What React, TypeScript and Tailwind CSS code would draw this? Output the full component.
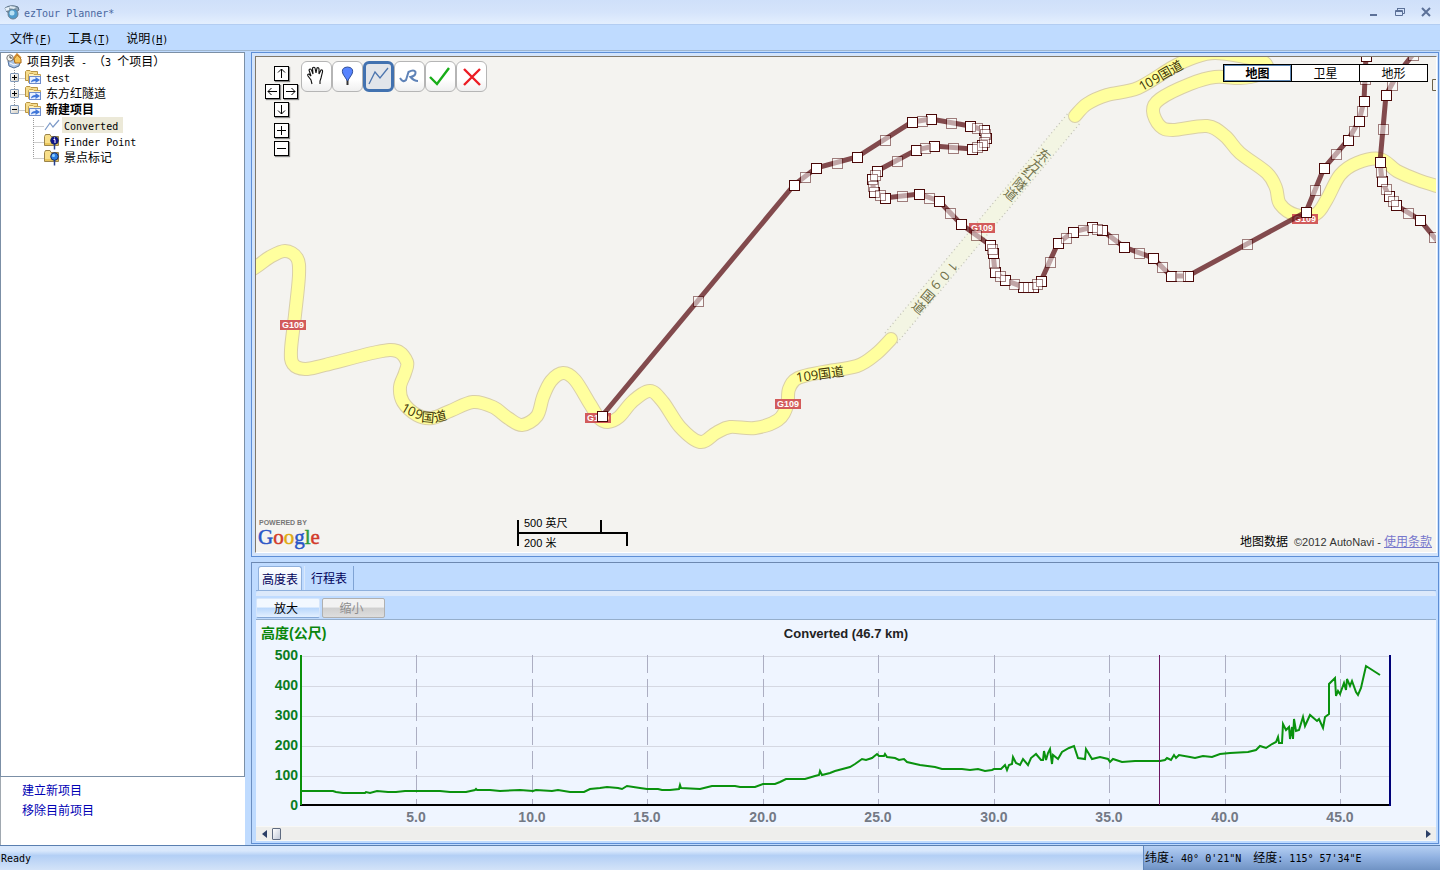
import { Fragment, type ReactNode } from 'react';

type Point = [number, number];

const ROUTE_WEST: Point[] = [
    [602, 416], [794, 185], [816, 168], [857, 157], [912, 122], [931, 119], [970, 126], [984, 130],
    [986, 138], [982, 145], [972, 149], [934, 146], [916, 150], [877, 171], [872, 179], [874, 192],
    [885, 198], [919, 194], [939, 201], [961, 224], [990, 245], [993, 253], [995, 272], [1005, 280],
    [1023, 287], [1033, 287], [1041, 281], [1058, 243], [1073, 232], [1092, 227], [1102, 230],
    [1124, 247], [1153, 258], [1171, 276], [1188, 276], [1306, 212], [1324, 168], [1348, 140],
    [1359, 121], [1364, 101], [1366, 56],
];

const ROUTE_EAST: Point[] = [
    [1428, 35], [1397, 75], [1386, 95], [1380, 162], [1382, 181], [1389, 196], [1396, 205],
    [1420, 220], [1448, 254],
];

const ROAD_WEST: Point[] = [
    [240, 277], [256, 267], [270, 257], [285, 251], [297, 258], [299, 275], [295, 315], [291, 350],
    [293, 364], [305, 369], [325, 365], [377, 352], [397, 351], [407, 362], [405, 373], [400, 387],
    [403, 402], [417, 415], [432, 418], [450, 411], [473, 402], [493, 407], [508, 418], [522, 425],
    [537, 416], [543, 397], [551, 381], [563, 373], [575, 380], [590, 404], [599, 418], [608, 422],
    [619, 417], [633, 401], [650, 391], [663, 402], [680, 427], [700, 442], [716, 433], [730, 427],
    [755, 428], [778, 420], [787, 406], [789, 389], [798, 378], [823, 372], [857, 366], [876, 354],
    [891, 339],
];

const ROAD_EAST: Point[] = [
    [1075, 116], [1087, 104], [1107, 95], [1138, 88], [1173, 67], [1195, 57], [1215, 53], [1245, 57],
    [1262, 61], [1267, 68], [1258, 75], [1240, 78], [1215, 77], [1190, 84], [1160, 99], [1153, 111],
    [1160, 126], [1173, 130], [1207, 126], [1225, 136], [1240, 153], [1267, 173], [1276, 188],
    [1280, 204], [1296, 215], [1316, 214], [1327, 199], [1340, 175], [1357, 163], [1380, 159],
    [1397, 171], [1418, 180], [1440, 187],
];

const HIGHWAY_SIGNS: Point[] = [[293, 325], [598, 418], [788, 404], [982, 228], [1305, 219]];

const ELEVATION: Point[] = [
    [301, 791], [333, 791], [336, 792], [343, 793], [365, 793], [366, 792], [370, 793], [377, 791],
    [388, 792], [396, 792], [405, 791], [440, 791], [450, 792], [466, 792], [475, 790], [476, 789],
    [477, 790], [490, 790], [500, 791], [520, 790], [533, 791], [536, 790], [552, 791], [558, 790],
    [570, 792], [584, 792], [590, 789], [600, 788], [607, 787], [618, 788], [622, 789], [627, 786],
    [640, 788], [647, 789], [658, 789], [662, 790], [670, 790], [679, 789], [680, 785], [681, 788],
    [700, 789], [708, 787], [712, 786], [735, 786], [740, 787], [755, 787], [763, 784], [775, 784],
    [780, 782], [786, 779], [800, 779], [805, 779], [815, 776], [819, 775], [820, 771], [822, 775],
    [830, 773], [835, 771], [850, 767], [855, 764], [862, 759], [866, 760], [872, 758], [877, 754],
    [879, 756], [884, 756], [885, 754], [887, 757], [895, 758], [899, 760], [904, 759], [907, 762],
    [920, 765], [935, 767], [942, 769], [958, 769], [962, 769], [970, 770], [978, 769], [985, 771],
    [992, 770], [994, 769], [1001, 769], [1005, 765], [1007, 770], [1009, 765], [1012, 764],
    [1013, 757], [1016, 763], [1020, 765], [1023, 759], [1028, 765], [1031, 758], [1036, 754],
    [1041, 760], [1043, 760], [1044, 751], [1046, 760], [1048, 753], [1050, 749], [1052, 764],
    [1053, 755], [1058, 759], [1062, 752], [1069, 748], [1074, 746], [1078, 758], [1085, 759],
    [1086, 749], [1092, 759], [1100, 757], [1108, 759], [1110, 762], [1113, 759], [1122, 762],
    [1135, 761], [1160, 761], [1165, 760], [1167, 758], [1171, 760], [1174, 755], [1176, 758],
    [1179, 755], [1190, 757], [1195, 758], [1203, 756], [1212, 757], [1220, 754], [1230, 753],
    [1248, 752], [1256, 750], [1260, 746], [1266, 748], [1272, 744], [1276, 742], [1278, 737],
    [1279, 743], [1282, 743], [1283, 724], [1286, 730], [1289, 727], [1290, 739], [1292, 727],
    [1293, 739], [1294, 719], [1296, 731], [1299, 730], [1303, 717], [1305, 726], [1310, 715],
    [1317, 721], [1319, 719], [1323, 728], [1325, 717], [1329, 714], [1329, 684], [1335, 678],
    [1336, 696], [1338, 691], [1340, 694], [1344, 683], [1346, 690], [1347, 679], [1350, 686],
    [1352, 681], [1356, 692], [1358, 695], [1361, 688], [1366, 666], [1380, 675],
];

const toPoints = (points: Point[]) => points.map((p) => p.join(',')).join(' ');

// Catmull-Rom spline through all points
const smooth = (points: Point[]) => {
    let d = `M${points[0][0]} ${points[0][1]}`;
    for (let i = 0; i < points.length - 1; i++) {
        const p0 = points[i - 1] ?? points[i];
        const p1 = points[i];
        const p2 = points[i + 1];
        const p3 = points[i + 2] ?? p2;
        d += `C${p1[0] + (p2[0] - p0[0]) / 6} ${p1[1] + (p2[1] - p0[1]) / 6} ${p2[0] - (p3[0] - p1[0]) / 6} ${p2[1] - (p3[1] - p1[1]) / 6} ${p2[0]} ${p2[1]}`;
    }
    return d;
};

// Latin runs use a narrow monospace next to the full-width characters
function Mixed({ children }: { children: string }) {
    return (
        <>
            {children.split(/([\x20-\x7e°]+)/).map((part, i) =>
                i % 2 ? (
                    <span key={i} className="font-['DejaVu_Sans_Mono',monospace] text-[10px] leading-none">{part}</span>
                ) : (
                    <Fragment key={i}>{part}</Fragment>
                )
            )}
        </>
    );
}

function AppIcon() {
    return (
        <svg width="16" height="16" viewBox="0 0 16 16">
            <path d="M1 4 Q7 0 14 3 L15 6 L10 9 L3 8Z" fill="#8fa3b5" stroke="#5b7186" />
            <path d="M1 4 L5 3 L5 6 L2 7Z" fill="#e8f2fa" />
            <circle cx="9" cy="10" r="5" fill="#4f9ccc" stroke="#6a7f90" />
            <circle cx="8" cy="9" r="2.5" fill="#b9e2f5" />
            <path d="M6 2 L12 3 L10 5 L5 4Z" fill="#dfe9f0" />
        </svg>
    );
}

function RootIcon() {
    return (
        <svg width="16" height="16" viewBox="0 0 16 16">
            <path d="M2 8 L9 6 L14 9 L13 13 L8 15 L3 13Z" fill="#a9c3e6" stroke="#52719c" />
            <path d="M4 10 L8 12 L13 10" fill="none" stroke="#fff" />
            <path d="M8 6 L11 2 L15 6 V10 H9Z" fill="#f7c65a" stroke="#a8691a" />
            <path d="M7 6 L11 1 L15 5" fill="none" stroke="#d08a2e" strokeWidth="1.5" />
            <circle cx="4" cy="5" r="3.2" fill="#f4f4ee" stroke="#777" />
            <path d="M4 3 V5 H6" fill="none" stroke="#444" />
        </svg>
    );
}

function ProjectIcon() {
    return (
        <svg width="17" height="16" viewBox="0 0 17 16">
            <path d="M.5 11.500 V2.500 L1.500 1.500 H5 L6 2.500 H12.500 V11.500Z" fill="#f6dc8c" stroke="#b99443" />
            <path d="M3.500 13.500 V5.500 L4.500 4.500 H8 L9 5.500 H15.500 V13.500Z" fill="#fff1bd" stroke="#c8a552" />
            <rect x="4.500" y="7.500" width="11" height="7" fill="#e9f1ff" stroke="#6f8ccb" />
            <path d="M6 13.500 Q6 10 10.500 10 V8 L15 11 L10.500 14 V12 Q7.500 12 6 13.500Z" fill="#3f76d9" />
        </svg>
    );
}

function PointFolderIcon({ info }: { info?: boolean }) {
    return (
        <svg width="16" height="17" viewBox="0 0 16 17">
            <path d="M.5 12.500 V3.500 L1.500 1.500 H6 L7 3.500 H14.500 V12.500Z" fill="#f8df8a" stroke="#9b844a" />
            <path d="M1 12 V10 H14 V12Z" fill="#e8c55c" />
            <path d="M10.500 10 V16.500" stroke="#27408f" strokeWidth="1.500" />
            <circle cx="10.500" cy="7.500" r="3.800" fill={info ? '#10108c' : '#2b7de0'} stroke="#152a66" />
            {info ? (
                <path d="M9.500 6.500 H11 V10 M10.500 4.500 V5.500" stroke="#fff" fill="none" />
            ) : (
                <circle cx="9.500" cy="6.500" r="1.500" fill="#8fd0ff" />
            )}
        </svg>
    );
}

function Expander({ open, label }: { open?: boolean; label: string }) {
    return (
        <button
            aria-label={label}
            aria-expanded={!!open}
            className="h-[9px] w-[9px] shrink-0 rounded-[1px] border border-[#8098b8] bg-linear-to-br from-white to-[#d5d0c4]"
        >
            <svg width="7" height="7" viewBox="0 0 7 7" className="block">
                <path d={open ? 'M1 3.500H6' : 'M1 3.500H6M3.500 1V6'} stroke="#000" />
            </svg>
        </button>
    );
}

function ProjectRow({ name, open }: { name: string; open?: boolean }) {
    return (
        <li className="flex h-4 items-center pl-[9px]">
            <Expander open={open} label={name} />
            <span className="ml-[6px] flex w-[21px] shrink-0">
                <ProjectIcon />
            </span>
            <span className={open ? 'font-bold' : ''}>
                <Mixed>{name}</Mixed>
            </span>
        </li>
    );
}

function ItemRow({ name, icon, selected }: { name: string; icon: ReactNode; selected?: boolean }) {
    return (
        <li className="flex h-4 items-center pl-[43px]">
            <span className="flex w-[18px] shrink-0">{icon}</span>
            <span className={selected ? 'bg-[#ece9d8] pl-[2px] pr-[5px]' : 'px-[2px]'}>
                <Mixed>{name}</Mixed>
            </span>
        </li>
    );
}

function Sidebar() {
    return (
        <aside className="flex w-[245px] shrink-0 flex-col bg-white">
            <div className="relative flex-1 border border-[#7b8fa6] leading-4">
                <svg className="pointer-events-none absolute left-0 top-0" width="64" height="120" viewBox="1 53 64 120">
                    <path
                        d="M14.500 70V106M14.500 78.500H25M14.500 94.500H25M14.500 110.500H25M33.500 118V158.500M33.500 126.500H44M33.500 142.500H44M33.500 158.500H44"
                        stroke="#9a9a9a"
                        strokeDasharray="1 1"
                        fill="none"
                    />
                </svg>
                <ul className="relative whitespace-pre">
                    <li className="flex h-4 items-center pl-[5px]">
                        <span className="w-[21px] shrink-0"><RootIcon /></span>
                        <span><Mixed>项目列表 - （3 个项目）</Mixed></span>
                    </li>
                    <ProjectRow name="test" />
                    <ProjectRow name="东方红隧道" />
                    <ProjectRow name="新建项目" open />
                    <ItemRow
                        name="Converted"
                        selected
                        icon={
                            <svg width="16" height="16" viewBox="0 0 16 16">
                                <path d="M1 13 L6 6 L9 10 L15 3" fill="none" stroke="#7d9ac8" strokeWidth="1.2" />
                            </svg>
                        }
                    />
                    <ItemRow name="Finder Point" icon={<PointFolderIcon info />} />
                    <ItemRow name="景点标记" icon={<PointFolderIcon />} />
                </ul>
            </div>
            <div className="flex h-[68px] flex-col items-start border-l border-[#a0a8b0] pl-[21px] pt-[3px] leading-5 text-[#0000b4]">
                <a href="#new">建立新项目</a>
                <a href="#remove">移除目前项目</a>
            </div>
        </aside>
    );
}

function Road({ points }: { points: Point[] }) {
    const d = smooth(points);
    return (
        <g fill="none" strokeLinecap="round" strokeLinejoin="round">
            <path d={d} stroke="#d9cfa8" strokeWidth="14" />
            <path d={d} stroke="#ffff9e" strokeWidth="12" />
        </g>
    );
}

function Route({ points }: { points: Point[] }) {
    return (
        <g>
            <polyline points={toPoints(points)} fill="none" stroke="#5a0f14" strokeOpacity=".74" strokeWidth="5" />
            {points.map(([x, y], i) => (
                <Fragment key={i}>
                    <rect x={x - 4.5} y={y - 4.5} width="10" height="10" fill="#fff" stroke="#4a0808" />
                    {i > 0 && (
                        <rect
                            x={Math.round((x + points[i - 1][0]) / 2) - 4.5}
                            y={Math.round((y + points[i - 1][1]) / 2) - 4.5}
                            width="10"
                            height="10"
                            fill="#fff"
                            stroke="#4a0808"
                            opacity=".5"
                        />
                    )}
                </Fragment>
            ))}
        </g>
    );
}

// Street names follow the road, one glyph at a time: glyph, x, y, angle
const TUNNEL_LABELS: [string, number, number, number][] = [
    ['东', 1044, 155, 40], ['方', 1036, 165, 40], ['红', 1029, 173, 40], ['隧', 1020, 184, 40],
    ['道', 1011, 194, 40], ['1', 953, 267, 130], ['0', 945, 276, 130], ['9', 936, 285, 130],
    ['国', 928, 296, 40], ['道', 919, 307, 40],
];

const ROAD_LABELS: [string, number, number, number][] = [
    ['1', 406, 408, 30], ['0', 412, 411, 24], ['9', 419, 414, 18], ['国', 428, 417, 5], ['道', 440, 416, -14],
    ['109国道', 820, 374, -8],
    ['1', 1143, 85, -30], ['0', 1149, 82, -30], ['9', 1156, 78, -30], ['国', 1165, 73, -30], ['道', 1176, 67, -30],
];

function MapDrawing() {
    return (
        <svg
            className="absolute inset-0 h-full w-full font-['Open_Sans','Noto_Sans_CJK_SC',sans-serif]"
            viewBox="256 57 1180 495"
            preserveAspectRatio="xMinYMin slice"
        >
            <path d="M891 338 L1075 117" stroke="#f3f5e3" strokeWidth="16" />
            <path d="M885 333 L1069 112 M897 343 L1081 122" stroke="#c3c3b8" strokeDasharray="1 3" strokeWidth="1.3" />
            <Road points={ROAD_WEST} />
            <Road points={ROAD_EAST} />
            {TUNNEL_LABELS.map(([t, x, y, angle], i) => (
                <text key={i} transform={`translate(${x} ${y}) rotate(${angle})`} y="5" fontSize="13" textAnchor="middle" fill="#6f6f48">{t}</text>
            ))}
            {ROAD_LABELS.map(([t, x, y, angle], i) => (
                <text key={i} transform={`translate(${x} ${y}) rotate(${angle})`} y="5" fontSize="13" textAnchor="middle" fill="#403404">{t}</text>
            ))}
            {HIGHWAY_SIGNS.map(([x, y]) => (
                <g key={x}>
                    <rect x={x - 13} y={y - 5} width="26" height="10" fill="#d25b5b" />
                    <text x={x} y={y + 3} fontSize="9" fontWeight="700" textAnchor="middle" fill="#fff" className="font-['Liberation_Sans',sans-serif]">G109</text>
                </g>
            ))}
            <Route points={ROUTE_WEST} />
            <Route points={ROUTE_EAST} />
            <path d="M1436 79.500H1432.500V90.500H1436" fill="none" stroke="#6b6048" />
        </svg>
    );
}

function NavButton({ label, d, className = '' }: { label: string; d: string; className?: string }) {
    return (
        <button aria-label={label} className={`h-[15px] w-[15px] border border-black bg-white shadow-[1px_1px_1px_#888] ${className}`}>
            <svg width="13" height="13" viewBox="0 0 13 13" className="block">
                <path d={d} fill="none" stroke="#000" />
            </svg>
        </button>
    );
}

function MapNav() {
    return (
        <div className="absolute left-[9px] top-[9px] flex w-[33px] flex-col items-center">
            <NavButton label="上" d="M6.500 11V2M3 5.500L6.500 2L10 5.500" />
            <div className="my-[3px] flex gap-[3px]">
                <NavButton label="左" d="M11 6.500H2M5.500 3L2 6.500L5.500 10" />
                <NavButton label="右" d="M2 6.500H11M7.500 3L11 6.500L7.500 10" />
            </div>
            <NavButton label="下" d="M6.500 2V11M3 7.500L6.500 11L10 7.500" />
            <NavButton label="放大地图" d="M2 6.500H11M6.500 2V11" className="mt-[6px]" />
            <NavButton label="缩小地图" d="M2 6.500H11" className="mt-[3px]" />
        </div>
    );
}

const TOOLS: { label: string; active?: boolean; icon: ReactNode }[] = [
    {
        label: '拖动',
        icon: (
            <path
                d="M10 22 L9 18 L6 14 Q5 12 7 12 L9 14 L7 8 Q8 6 9.500 8 L11 12 L10.500 6 Q12 4.500 13 6 L14 11 L15 6 Q16.500 5 17 7 V12 L19 8 Q21 7.500 20.500 10 L19 16 L18 19 V22"
                fill="#fff"
                stroke="#111"
                strokeWidth="1.1"
            />
        ),
    },
    {
        label: '标记',
        icon: (
            <>
                <path d="M14.500 15 V23" stroke="#333" strokeWidth="2" />
                <path d="M14.500 19 L10 12 Q8 7 12 5.500 Q14.500 4.500 17 5.500 Q21 7 19 12Z" fill="#5784ff" stroke="#304f9a" />
            </>
        ),
    },
    { label: '折线', active: true, icon: <path d="M5 22 L11 10 L16 16 L24 6" fill="none" stroke="#4d75ae" strokeWidth="1.3" /> },
    {
        label: '曲线',
        icon: <path d="M5 16 Q8 21 11 18 L13.500 10 Q19 7 20.500 10 Q21 14 15.500 15 Q19 19 23 19" fill="none" stroke="#5f83b8" strokeWidth="2" />,
    },
    { label: '确定', icon: <path d="M4 15 L11 22 L23 6" fill="none" stroke="#18ad18" strokeWidth="2.400" /> },
    { label: '取消', icon: <path d="M7 7 L23 23 M23 7 L7 23" fill="none" stroke="#ec1c24" strokeWidth="2.400" /> },
];

function MapTools() {
    return (
        <div className="absolute left-[45px] top-1 flex">
            {TOOLS.map((tool) => (
                <button
                    key={tool.label}
                    aria-label={tool.label}
                    aria-pressed={!!tool.active}
                    className={
                        tool.active
                            ? 'flex h-[31px] w-[31px] items-center justify-center rounded-[6px] border-3 border-[#4272b0] bg-[#e2e5ea]'
                            : 'flex h-[31px] w-[31px] items-center justify-center rounded-[6px] border border-[#b5b5b5] bg-linear-to-b from-white from-60% to-[#efefef]'
                    }
                >
                    <svg width="29" height="29" viewBox="0 0 29 29" className="shrink-0">{tool.icon}</svg>
                </button>
            ))}
        </div>
    );
}

function MapPanel() {
    return (
        <section className="flex min-h-0 flex-1 border border-[#5d8ed6] bg-[#d3e4fb] py-[3px] pl-[3px] pr-px">
            <div className="relative flex-1 overflow-hidden border border-b-white border-l-[#80786a] border-r-white border-t-[#80786a] bg-[#f4f3f0]">
                <MapDrawing />
                <MapNav />
                <MapTools />
                <div className="absolute right-2 top-[7px] flex h-[18px] border border-black bg-white">
                    {['地图', '卫星', '地形'].map((name, i) => (
                        <button
                            key={name}
                            className={
                                i === 0
                                    ? 'w-[67px] border border-[#5d87b5] font-bold leading-[12px]'
                                    : 'w-[68px] border-l border-black leading-[14px]'
                            }
                        >
                            {name}
                        </button>
                    ))}
                </div>
                <svg className="absolute bottom-0 left-0" width="72" height="36" viewBox="0 -2 72 36">
                    <text x="3" y="7" fontSize="7" fontWeight="700" fill="#777" className="font-['Liberation_Sans',sans-serif]">POWERED BY</text>
                    <text x="2" y="26" fontSize="21" strokeWidth=".5" className="font-['Liberation_Serif',serif]">
                        <tspan fill="#2a56c6" stroke="#2a56c6">G</tspan>
                        <tspan fill="#d23a2a" stroke="#d23a2a">o</tspan>
                        <tspan fill="#dfaa10" stroke="#dfaa10">o</tspan>
                        <tspan fill="#2a56c6" stroke="#2a56c6">g</tspan>
                        <tspan fill="#2c9a3c" stroke="#2c9a3c">l</tspan>
                        <tspan fill="#d23a2a" stroke="#d23a2a">e</tspan>
                    </text>
                </svg>
                <div className="absolute bottom-[6px] left-[261px] w-[111px] font-['Liberation_Sans','Noto_Sans_CJK_SC',sans-serif] text-[11px]">
                    <div className="h-3 w-[85px] border-x-2 border-black pl-[5px] leading-[6px]">500 英尺</div>
                    <div className="h-[14px] border-x-2 border-t-2 border-black pl-[5px] leading-[18px]">200 米</div>
                </div>
                <p className="absolute bottom-0 right-1 font-['Liberation_Sans','Noto_Sans_CJK_SC',sans-serif] leading-5">
                    <span className="mr-[6px]">地图数据</span>
                    <span className="text-[11px] text-[#333]">©2012 AutoNavi - </span>
                    <a href="#terms" className="text-[#7777cc] underline">使用条款</a>
                </p>
            </div>
        </section>
    );
}

function ElevationChart() {
    return (
        <svg
            className="block h-[206px] w-full bg-[#eff5ff] font-['Liberation_Sans','Noto_Sans_CJK_SC',sans-serif]"
            viewBox="256 620 1180 206"
            preserveAspectRatio="xMinYMin slice"
            role="img"
            aria-label="Converted (46.7 km)"
        >
            <text x="261" y="638" fontSize="14" fontWeight="700" fill="#0b860b">高度(公尺)</text>
            <text x="846" y="638" fontSize="13" fontWeight="700" textAnchor="middle" fill="#222">Converted (46.7 km)</text>
            {[500, 400, 300, 200, 100, 0].map((value, i) => (
                <g key={value}>
                    {value > 0 && <path d={`M302 ${656.5 + i * 30}H1389`} stroke="#d5d8e2" />}
                    <text x="298" y={660 + i * 30} fontSize="14" fontWeight="700" textAnchor="end" fill="#0b7d1e">{value}</text>
                </g>
            ))}
            {[416, 532, 647, 763, 878, 994, 1109, 1225, 1340].map((x, i) => (
                <g key={x}>
                    <path d={`M${x + 0.5} 655V804`} stroke="#acaec2" strokeDasharray="18 6" />
                    <text x={x} y="822" fontSize="14" fontWeight="700" textAnchor="middle" fill="#737985">{(i + 1) * 5}.0</text>
                </g>
            ))}
            <path d="M300 805H1391" stroke="#000" strokeWidth="2" />
            <path d="M301 655V805" stroke="#0a910a" strokeWidth="2" />
            <path d="M1390 655V806" stroke="#000078" strokeWidth="2" />
            <polyline points={toPoints(ELEVATION)} fill="none" stroke="#0a920e" strokeWidth="2" />
            <path d="M1159.500 655V805" stroke="#6c1460" />
        </svg>
    );
}

function ChartPanel() {
    return (
        <section className="border border-b-[#5d8ed6] border-l-[#6c8fc2] border-r-[#5d8ed6] border-t-[#6c88b0] bg-[#bfdbff] pb-[2px] pl-1 pr-[2px]">
            <div role="tablist" className="flex h-[28px] items-end border-b border-[#8fb0dc] pl-[2px] text-[#00005a]">
                <button role="tab" aria-selected="true" className="h-6 w-[44px] rounded-t-[3px] border border-b-0 border-[#8fb0dc] bg-linear-to-b from-white to-[#dfebfb]">
                    高度表
                </button>
                <button role="tab" aria-selected="false" className="ml-[2px] h-6 w-[50px] border-x border-l-[#d9e8fb] border-r-[#7fa3d4]">
                    行程表
                </button>
            </div>
            <div className="h-[5px] rounded-t-[3px] bg-[#dce9fb]" />
            <div className="flex h-6 items-start gap-[2px] border-b border-[#95aecb] pt-[2px]">
                <button className="h-[20px] w-[64px] rounded-[2px] border border-[#d6e6fb] border-b-[#86a8d6] bg-linear-to-b from-[#f2f8ff] from-45% via-[#b9d7fb] via-50% to-[#e3f0ff] pr-1 leading-[18px]">
                    放大
                </button>
                <button disabled className="h-[20px] w-[63px] rounded-[2px] border border-[#b0b0b0] bg-linear-to-b from-[#f2f2f2] from-45% via-[#cfcfcf] via-50% to-[#dedede] pr-1 leading-[18px] text-[#8e8e8e]">
                    缩小
                </button>
            </div>
            <ElevationChart />
            <div className="flex h-[15px] items-center border-y border-[#f8f8f6] bg-[#eeeeec]">
                <button aria-label="向左" className="flex h-full w-4 items-center justify-center">
                    <svg width="5" height="8" viewBox="0 0 5 8"><path d="M5 0V8L0 4Z" fill="#2c3f66" /></svg>
                </button>
                <button aria-label="滚动" className="h-3 w-[9px] rounded-[1px] border border-[#5f6b80] bg-linear-to-br from-white to-[#c2cad8]" />
                <button aria-label="向右" className="ml-auto flex h-full w-4 items-center justify-center">
                    <svg width="5" height="8" viewBox="0 0 5 8"><path d="M0 0V8L5 4Z" fill="#2c3f66" /></svg>
                </button>
            </div>
        </section>
    );
}

export default function App() {
    return (
        <div className="flex h-screen flex-col overflow-hidden bg-[#bfdbff] font-['Noto_Sans_CJK_SC',sans-serif] text-[12px] text-black">
            <header className="flex h-[25px] shrink-0 items-center border-b border-[#b3cdf2] bg-linear-to-b from-[#cfe0fa] via-[#d5e4fb] to-[#e4effe] pl-1">
                <AppIcon />
                <h1 className="ml-1 text-[#4a68a0]"><Mixed>ezTour Planner*</Mixed></h1>
                <div className="ml-auto flex pr-px">
                    <button aria-label="最小化" className="flex w-[26px] justify-center">
                        <svg width="12" height="12" viewBox="0 0 12 12"><path d="M2 9H9" stroke="#5c7198" strokeWidth="2" /></svg>
                    </button>
                    <button aria-label="还原" className="flex w-[26px] justify-center">
                        <svg width="12" height="12" viewBox="0 0 12 12" fill="none" stroke="#5c7198">
                            <path d="M3.500 4V2.500H10.500V7.500H9M3 2.500H11" />
                            <path d="M1.500 4.500H8.500V9.500H1.500ZM1 5.500H9" />
                        </svg>
                    </button>
                    <button aria-label="关闭" className="flex w-[26px] justify-center">
                        <svg width="12" height="12" viewBox="0 0 12 12"><path d="M2 2L10 10M10 2L2 10" stroke="#5c7198" strokeWidth="2" /></svg>
                    </button>
                </div>
            </header>
            <nav className="flex h-[26px] shrink-0 items-center gap-4 border-b border-[#9fb6cf] pl-[10px]">
                {[['文件', 'F'], ['工具', 'T'], ['说明', 'H']].map(([name, key]) => (
                    <button key={key}>
                        {name}
                        <span className="font-['DejaVu_Sans_Mono',monospace] text-[10px] leading-none">(<u>{key}</u>)</span>
                    </button>
                ))}
            </nav>
            <main className="flex min-h-0 flex-1 pt-px">
                <Sidebar />
                <div className="ml-[6px] flex min-w-0 flex-1 flex-col gap-[5px] pb-px pr-px">
                    <MapPanel />
                    <ChartPanel />
                </div>
            </main>
            <footer className="flex h-[25px] shrink-0 items-stretch whitespace-pre border-t border-[#5a7fb0] bg-linear-to-b from-[#d9e8fc] from-20% via-[#b3cff5] via-40% to-[#d3e3f8] leading-[22px]">
                <span className="flex-1 pl-px"><Mixed>Ready</Mixed></span>
                <span className="w-[297px] border-l border-[#5f86bd] bg-linear-to-b from-[#b5cff3] via-[#8fb0e0] to-[#7093c4] pl-px">
                    <Mixed>{'纬度: 40° 0\'21"N  经度: 115° 57\'34"E'}</Mixed>
                </span>
            </footer>
        </div>
    );
}
